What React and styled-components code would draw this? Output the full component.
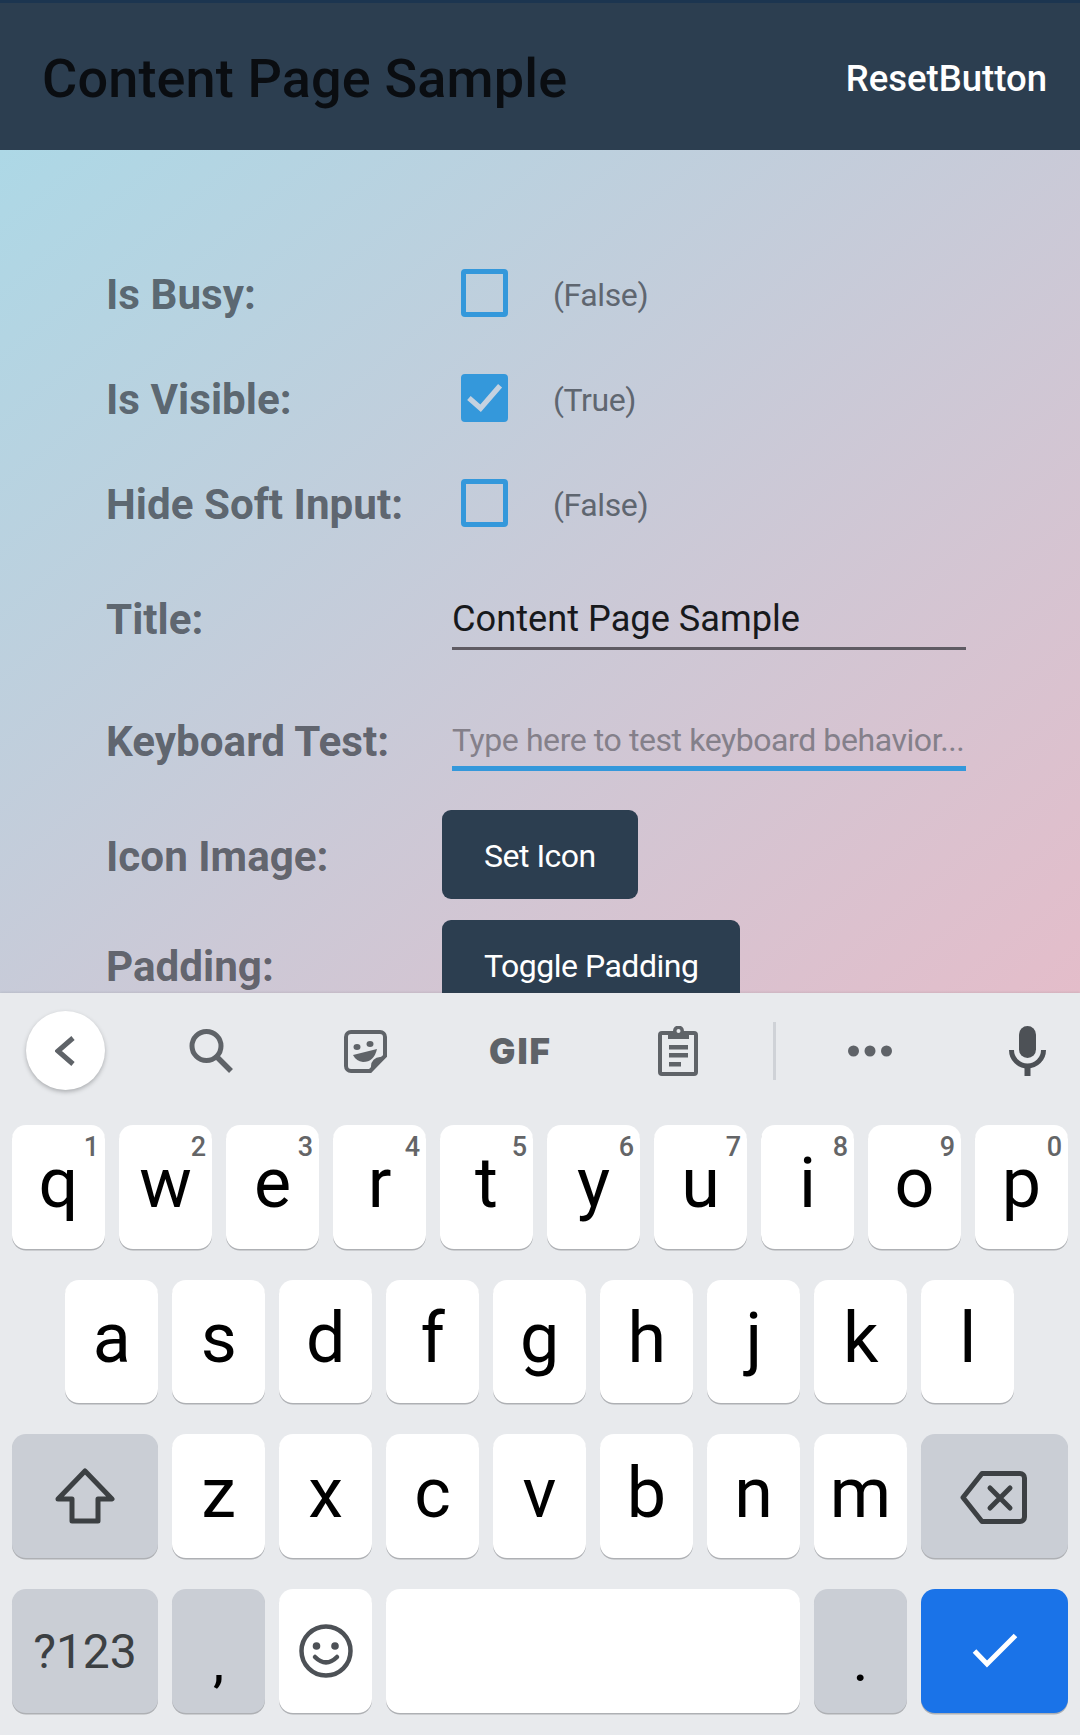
import styled, { createGlobalStyle } from "styled-components";

const GlobalStyle = createGlobalStyle`
  html, body {
    margin: 0;
    padding: 0;
    background: #e8eaed;
  }
  * {
    box-sizing: border-box;
  }
`;

const rowOne = [
  ["q", "1"],
  ["w", "2"],
  ["e", "3"],
  ["r", "4"],
  ["t", "5"],
  ["y", "6"],
  ["u", "7"],
  ["i", "8"],
  ["o", "9"],
  ["p", "0"],
];
const rowTwo = ["a", "s", "d", "f", "g", "h", "j", "k", "l"];
const rowThree = ["z", "x", "c", "v", "b", "n", "m"];

function App() {
  return (
    <Screen>
      <GlobalStyle />
      <Header>
        <PageTitle>Content Page Sample</PageTitle>
        <HeaderAction>ResetButton</HeaderAction>
      </Header>
      <Content>
        <Row>
          <Label>Is Busy:</Label>
          <CheckBox />
          <Status>(False)</Status>
        </Row>
        <Row>
          <Label>Is Visible:</Label>
          <CheckBox $checked>
            <svg width="38" height="38" viewBox="0 0 38 38">
              <path
                d="M3 19 L15 29.5 L35 6.5"
                fill="none"
                stroke="#c5d2e0"
                strokeWidth="5.5"
              />
            </svg>
          </CheckBox>
          <Status>(True)</Status>
        </Row>
        <Row>
          <Label>Hide Soft Input:</Label>
          <CheckBox />
          <Status>(False)</Status>
        </Row>
        <Row $height="125px">
          <Label>Title:</Label>
          <EntryBox>
            <TitleInput readOnly value="Content Page Sample" />
          </EntryBox>
        </Row>
        <Row $height="119px">
          <Label>Keyboard Test:</Label>
          <EntryBox>
            <KeyboardInput readOnly placeholder="Type here to test keyboard behavior..." />
          </EntryBox>
        </Row>
        <Row $height="110px">
          <Label>Icon Image:</Label>
          <ActionButton>Set Icon</ActionButton>
        </Row>
        <Row $height="110px">
          <Label>Padding:</Label>
          <ActionButton>Toggle Padding</ActionButton>
        </Row>
      </Content>
      <Keyboard>
        <Toolbar>
          <BackCircle>
            <svg width="20" height="30" viewBox="0 0 20 30">
              <path d="M18 2 L3 15 L18 28" fill="none" stroke="#5f6368" strokeWidth="5" />
            </svg>
          </BackCircle>
          <ToolIcon $left="84px">
            <svg width="44" height="44" viewBox="0 0 44 44">
              <circle cx="17.5" cy="17" r="14.5" fill="none" stroke="#5f6368" strokeWidth="5" />
              <path d="M27 27 L42 42" stroke="#5f6368" strokeWidth="5.5" />
            </svg>
          </ToolIcon>
          <ToolIcon $left="111px">
            <svg width="43" height="43" viewBox="0 0 43 43">
              <path
                d="M7 2 H36 A5 5 0 0 1 41 7 V26 L26 41 H7 A5 5 0 0 1 2 36 V7 A5 5 0 0 1 7 2 Z"
                fill="none"
                stroke="#5f6368"
                strokeWidth="4"
              />
              <path d="M43 26 L27 43 V36 A9 9 0 0 1 36 27 Z" fill="#5f6368" />
              <ellipse cx="13" cy="17" rx="3.5" ry="3" fill="#5f6368" />
              <ellipse cx="26" cy="14" rx="3.5" ry="3" fill="#5f6368" />
              <path d="M9 25 L33 19 Q30 32 19 32 Q12 31 9 25 Z" fill="#5f6368" />
            </svg>
          </ToolIcon>
          <GifLabel>GIF</GifLabel>
          <ToolIcon $left="108px">
            <svg width="40" height="50" viewBox="0 0 40 50">
              <rect x="2" y="7" width="36" height="41" rx="2" fill="none" stroke="#5f6368" strokeWidth="4" />
              <path
                d="M10 5 H15 A5.5 5.5 0 0 1 26 5 H31 V13 H10 Z"
                fill="#5f6368"
              />
              <circle cx="20.5" cy="5" r="2" fill="#e8eaed" />
              <rect x="11" y="19" width="19" height="4.5" fill="#5f6368" />
              <rect x="11" y="27" width="19" height="4.5" fill="#5f6368" />
              <rect x="11" y="36" width="12" height="4.5" fill="#5f6368" />
            </svg>
          </ToolIcon>
          <ToolDivider />
          <ToolIcon $left="72px">
            <svg width="44" height="12" viewBox="0 0 44 12">
              <circle cx="5.5" cy="6" r="5.5" fill="#5f6368" />
              <circle cx="22" cy="6" r="5.5" fill="#5f6368" />
              <circle cx="38.5" cy="6" r="5.5" fill="#5f6368" />
            </svg>
          </ToolIcon>
          <ToolIcon $left="117px">
            <svg width="37" height="50" viewBox="0 0 37 50">
              <rect x="10" y="0" width="17" height="32" rx="8.5" fill="#4d5156" />
              <path d="M2.5 24 A16 16 0 0 0 34.5 24" fill="none" stroke="#4d5156" strokeWidth="5" />
              <rect x="15.5" y="38" width="6" height="12" fill="#4d5156" />
            </svg>
          </ToolIcon>
        </Toolbar>
        <KeyRows>
          <KeyRow>
            {rowOne.map(([letter, digit]) => (
              <LetterKey key={letter}>
                {letter}
                <KeyHint>{digit}</KeyHint>
              </LetterKey>
            ))}
          </KeyRow>
          <KeyRow $nudge="0.5px">
            {rowTwo.map((letter) => (
              <LetterKey key={letter}>{letter}</LetterKey>
            ))}
          </KeyRow>
          <KeyRow>
            <Key $width="146px" $tone="gray">
              <svg width="60" height="56" viewBox="0 0 60 56">
                <path
                  d="M30 3 L57 31 H43 V53 H17 V31 H3 Z"
                  fill="none"
                  stroke="#3c4043"
                  strokeWidth="5"
                  strokeLinejoin="round"
                />
              </svg>
            </Key>
            {rowThree.map((letter) => (
              <LetterKey key={letter}>{letter}</LetterKey>
            ))}
            <Key $width="147px" $tone="gray">
              <BackspaceIcon width="67" height="53" viewBox="0 0 67 53">
                <path
                  d="M22 2.5 H60 A4.5 4.5 0 0 1 64.5 7 V46 A4.5 4.5 0 0 1 60 50.5 H22 L3 26.5 Z"
                  fill="none"
                  stroke="#3c4043"
                  strokeWidth="5"
                  strokeLinejoin="round"
                />
                <path
                  d="M30 17 L50 37 M50 17 L30 37"
                  fill="none"
                  stroke="#3c4043"
                  strokeWidth="5"
                  strokeLinecap="round"
                />
              </BackspaceIcon>
            </Key>
          </KeyRow>
          <KeyRow>
            <SymbolKey>?123</SymbolKey>
            <PunctuationKey>,</PunctuationKey>
            <Key>
              <svg width="54" height="54" viewBox="0 0 54 54">
                <circle cx="27" cy="27" r="24.5" fill="none" stroke="#4d5156" strokeWidth="4.5" />
                <circle cx="17.5" cy="22" r="3.8" fill="#4d5156" />
                <circle cx="36" cy="22" r="3.8" fill="#4d5156" />
                <path d="M16 33 Q27 44 38 33" fill="none" stroke="#4d5156" strokeWidth="4.5" strokeLinecap="round" />
              </svg>
            </Key>
            <Key $width="414px" aria-label="space" />
            <PunctuationKey>.</PunctuationKey>
            <Key $width="147px" $tone="blue">
              <svg width="46" height="35" viewBox="0 0 46 35">
                <path d="M2.5 18 L15 31 L43.5 2.5" fill="none" stroke="#ffffff" strokeWidth="5" />
              </svg>
            </Key>
          </KeyRow>
        </KeyRows>
      </Keyboard>
    </Screen>
  );
}

export default App;

const keyTones = {
  white: "#ffffff",
  gray: "#caced5",
  blue: "#1a73e8",
};

const Screen = styled.div`
  width: 1080px;
  height: 1735px;
  display: flex;
  flex-direction: column;
  overflow: hidden;
  font-family: Roboto, "Liberation Sans", sans-serif;
`;

const Header = styled.header`
  height: 150px;
  flex: none;
  display: flex;
  align-items: center;
  justify-content: space-between;
  padding: 3px 33px 0 42px;
  background: #2c3e50;
  border-top: 3px solid #1c3550;
`;

const PageTitle = styled.h1`
  margin: 0;
  font-size: 54px;
  font-weight: 500;
  letter-spacing: 0.15px;
  color: #0a0d11;
`;

const HeaderAction = styled.span`
  font-size: 36.5px;
  font-weight: 500;
  color: #ffffff;
`;

const Content = styled.main`
  height: 843px;
  flex: none;
  padding: 90.5px 0 0 106px;
  overflow: hidden;
  background: linear-gradient(140deg, #add8e6 0%, #e4bdca 100%);
`;

const Row = styled.div`
  height: ${({ $height }) => $height || "105px"};
  display: flex;
  align-items: center;
`;

const Label = styled.span`
  width: 336px;
  flex: none;
  padding-top: 3px;
  font-size: 42.2px;
  font-weight: 700;
  color: rgba(37, 41, 48, 0.65);
`;

const CheckBox = styled.div`
  width: 47px;
  height: 48px;
  margin-left: 18.5px;
  display: flex;
  align-items: center;
  justify-content: center;
  border: 5px solid #3498db;
  border-radius: 4px;
  background: ${({ $checked }) => ($checked ? "#3498db" : "transparent")};
`;

const Status = styled.span`
  margin-left: 45.5px;
  padding-top: 3px;
  font-size: 32px;
  letter-spacing: -0.4px;
  color: #5f6670;
`;

const EntryBox = styled.div`
  width: 514px;
  margin-left: 10px;
`;

const TitleInput = styled.input`
  display: block;
  width: 100%;
  height: 64px;
  padding: 4px 0 0;
  border: 0;
  border-bottom: 3px solid #5f5b63;
  outline: none;
  background: transparent;
  font-family: inherit;
  font-size: 36.2px;
  color: #17191c;
`;

const KeyboardInput = styled(TitleInput)`
  height: 62px;
  border-bottom: 5px solid #3498db;
  font-size: 32px;
  letter-spacing: -0.42px;

  &::placeholder {
    color: #84808a;
    opacity: 1;
  }
`;

const ActionButton = styled.button`
  height: 89px;
  padding: 2px 42px 0;
  border: 0;
  border-radius: 9px;
  background: #2c3e50;
  font-family: inherit;
  font-size: 32px;
  letter-spacing: -0.5px;
  color: #ffffff;
`;

const Keyboard = styled.section`
  position: relative;
  height: 742px;
  flex: none;
  background: #e8eaed;
  box-shadow: 0 -1px 2px rgba(60, 64, 67, 0.1);
`;

const Toolbar = styled.div`
  height: 116px;
  display: flex;
  align-items: center;
`;

const BackCircle = styled.div`
  width: 79px;
  height: 79px;
  margin-left: 26px;
  margin-top: -1px;
  display: flex;
  align-items: center;
  justify-content: center;
  border-radius: 50%;
  background: #ffffff;
  box-shadow: 0 2px 4px rgba(60, 64, 67, 0.35);

  svg {
    margin-right: 2px;
  }
`;

const ToolIcon = styled.div`
  display: flex;
  margin-left: ${({ $left }) => $left};
`;

const GifLabel = styled.span`
  width: 61px;
  margin-left: 102px;
  font-family: Inter, Roboto, sans-serif;
  font-size: 35px;
  font-weight: 900;
  letter-spacing: 2px;
  color: #5f6368;
`;

const ToolDivider = styled.div`
  width: 3px;
  height: 58px;
  margin-left: 75px;
  background: #cfd2d7;
`;

const KeyRows = styled.div`
  padding-top: 16px;
  display: flex;
  flex-direction: column;
  gap: 31.2px;
`;

const KeyRow = styled.div`
  display: flex;
  justify-content: center;
  gap: 14px;
  padding-right: ${({ $nudge }) => $nudge || "0"};
`;

const Key = styled.div`
  position: relative;
  width: ${({ $width }) => $width || "93px"};
  height: 123.5px;
  display: flex;
  align-items: center;
  justify-content: center;
  border-radius: 14px;
  background: ${({ $tone }) => keyTones[$tone] || keyTones.white};
  box-shadow: 0 1.5px 0 #aeb0b4;
  color: #000000;
`;

const LetterKey = styled(Key)`
  padding-bottom: 7px;
  font-size: 70px;
`;

const KeyHint = styled.span`
  position: absolute;
  top: 6px;
  right: 6px;
  font-size: 27px;
  font-weight: 500;
  color: #646567;
`;

const BackspaceIcon = styled.svg`
  margin: 3px 2px 0 0;
`;

const SymbolKey = styled(Key).attrs({ $width: "146px", $tone: "gray" })`
  padding-top: 1px;
  font-size: 48px;
  color: #3c4043;
`;

const PunctuationKey = styled(Key).attrs({ $tone: "gray" })`
  align-items: flex-end;
  padding-bottom: 20px;
  font-size: 50px;
  font-weight: 500;
`;
